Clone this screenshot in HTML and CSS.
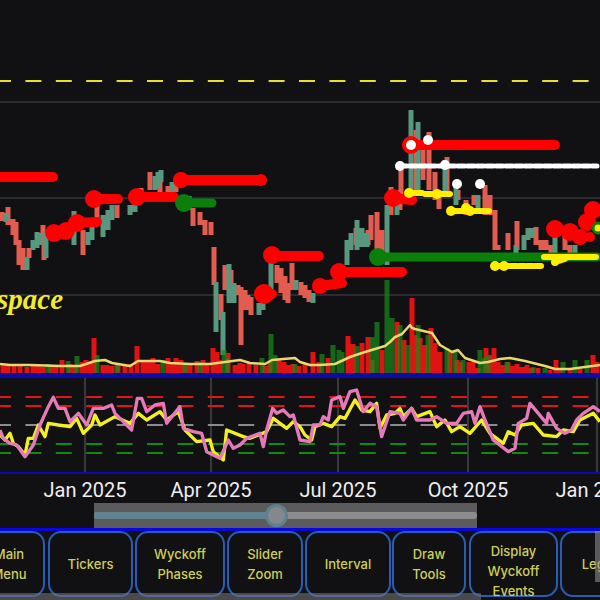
FILE: index.html
```html
<!DOCTYPE html>
<html lang="en">
<head>
  <meta charset="UTF-8" />
  <title>Wyckoff Chart</title>
  <link rel="stylesheet" href="styles.css">
</head>
<body>
  <!-- Chart panels and date axis -->
  <svg class="chart" viewBox="0 0 600 503" width="600" height="503">
    <path class="grid" d="M0 102H600M0 198H600M0 295H600" />
    <path class="level-top" d="M-5 81H600" />

    <!-- Candles -->
    <path class="candle-down" d="M2 212V221M8 207V225M13 219V235M16 222V245M19 240V265M23 248V270M29 248V258M43 225V245M44 232V260M83 230V255M97 205V225M117 205V218M141 188V200M150 172V190M160 180V192M168 186V198M176 178V192M193 208V226M200 212V225M205 220V235M211 222V235M214 247V285M221 294V320M225 265V290M231 270V285M238 285V295M241 287V345M245 290V310M248 295V310M251 297V315M277 265V283M281 268V293M285 276V300M288 283V303M292 263V290M301 282V295M305 285V298M309 290V302M356 228V245M368 230V245M371 215V240M377 212V250M382 230V260M391 187V215M400 190V210M401 170V195M416 130V195M423 150V180M429 132V190M435 172V200M439 190V209M447 157V192M458 190V200M466 200V215M474 195V205M485 185V215M490 195V215M495 210V250M498 245V250M508 233V250M517 221V250M536 227V245M541 240V250M546 240V250M551 245V253M565 235V250M570 245V255" />
    <path class="candle-up" d="M6 213V222M27 257V270M33 240V250M37 232V248M40 233V245M46 232V258M74 211V245M88 232V245M92 220V240M103 215V237M108 210V230M112 205V220M130 205V215M135 200V212M155 176V190M158 172V188M161 170V182M172 182V192M189 196V210M216 282V332M223 312V355M229 264V303M234 283V303M259 303V315M263 295V310M271 262V295M296 280V290M313 293V303M347 240V265M351 233V250M357 220V250M362 228V247M367 233V247M387 205V265M397 200V215M411 110V200M418 122V190M445 160V195M456 185V205M478 195V210M516 245V255M524 235V250M528 228V240M532 228V238M555 237V255M575 245V255" />

    <!-- Wyckoff event markers -->
    <g class="mark-red">
      <path d="M-5 177H53M181 180H258M94 199H118M137 197H174M54 233L66 231L77 223L97 222M272 256H319M264 294H272M320 286L342 283M339 272H402M393 198L412 200M411 145H555" />
      <circle cx="181" cy="180" r="8" />
      <circle cx="261" cy="180" r="6" />
      <circle cx="94" cy="199" r="9" />
      <circle cx="137" cy="197" r="9" />
      <circle cx="54" cy="233" r="9" />
      <circle cx="66" cy="231" r="9" />
      <circle cx="77" cy="223" r="9" />
      <circle cx="272" cy="255" r="9" />
      <circle cx="264" cy="294" r="10" />
      <circle cx="320" cy="286" r="8" />
      <circle cx="339" cy="272" r="9" />
      <circle cx="393" cy="198" r="9" />
      <circle cx="411" cy="145" r="9" />
      <circle cx="555" cy="229" r="9" />
      <circle cx="570" cy="232" r="9" />
      <circle cx="580" cy="237" r="8" />
      <circle cx="590" cy="237" r="5" />
      <circle cx="587" cy="222" r="9" />
      <circle cx="593" cy="210" r="9" />
    </g>
    <g class="mark-green">
      <path d="M184 203H212M378 257H597" />
      <circle cx="184" cy="203" r="9" />
      <circle cx="378" cy="257" r="9" />
    </g>
    <g class="mark-white">
      <path class="mark-dots" d="M400 166H597" />
      <circle cx="411" cy="145" r="5" />
      <circle cx="428" cy="140" r="5" />
      <circle cx="400" cy="166" r="5" />
      <circle cx="445" cy="165" r="5" />
      <circle cx="457" cy="184" r="5" />
      <circle cx="480" cy="184" r="5" />
    </g>
    <g class="mark-yellow">
      <path d="M409 193H422M425 194H450M451 211H490M495 266H543M544 257H596M555 262L565 259" />
      <circle cx="409" cy="193" r="5" />
      <circle cx="437" cy="194" r="5" />
      <circle cx="451" cy="211" r="5" />
      <circle cx="466" cy="208" r="5" />
      <circle cx="470" cy="211" r="5" />
      <circle cx="495" cy="266" r="5" />
      <circle cx="504" cy="266" r="5" />
      <circle cx="555" cy="262" r="4" />
    </g>
    <circle class="mark-ring" cx="598" cy="228" r="5" />
    <text class="watermark" x="-3" y="309">space</text>

    <!-- Volume -->
    <path class="vol-red" d="M3 373V364M8 373V365M14 373V365M20 373V364M27 373V367M33 373V366M38 373V366M43 373V367M51 373V367M56 373V366M62 373V360M70 373V364M75 373V366M82 373V362M86 373V360M90 373V363M94 373V338M103 373V365M107 373V365M112 373V366M118 373V364M125 373V366M131 373V364M137 373V346M143 373V361M148 373V362M153 373V358M158 373V364M168 373V358M172 373V362M176 373V358M181 373V360M186 373V365M190 373V363M197 373V361M203 373V360M207 373V364M213 373V348M217 373V352M220 373V360M228 373V353M235 373V365M240 373V363M243 373V364M249 373V362M256 373V365M265 373V366M270 373V362M279 373V360M284 373V362M288 373V365M293 373V364M299 373V366M305 373V364M313 373V352M319 373V362M328 373V358M348 373V336M353 373V344M362 373V343M368 373V337M372 373V360M382 373V350M397 373V322M404 373V340M412 373V298M415 373V335M420 373V338M425 373V345M431 373V328M435 373V343M440 373V352M450 373V352M457 373V360M460 373V362M469 373V362M473 373V362M478 373V368M486 373V348M490 373V355M494 373V348M498 373V362M503 373V365M508 373V362M512 373V366M517 373V364M522 373V367M527 373V365M532 373V368M538 373V368M550 373V370M556 373V360M560 373V370M570 373V368M580 373V369M593 373V355M597 373V362" />
    <path class="vol-green" d="M48 373V364M68 373V361M77 373V356M97 373V355M117 373V365M163 373V360M185 373V364M200 373V362M224 373V350M227 373V358M262 373V358M271 373V334M275 373V355M295 373V364M322 373V354M333 373V345M339 373V350M342 373V352M357 373V346M372 373V337M377 373V322M387 373V280M392 373V318M400 373V325M408 373V345M418 373V325M428 373V335M447 373V348M455 373V350M463 373V360M480 373V350M484 373V358M488 373V356M507 373V362M533 373V367M545 373V368M563 373V362M575 373V360M587 373V360" />
    <path class="vol-line" d="M0 364L10 365H30L60 366H80L95 361L105 360L112 363L130 366L138 361H160L170 363L190 364H210L240 360L250 363L265 364L272 360L295 358L300 362L310 365H320L335 364L350 357L365 352L385 346L390 342L395 337L402 334L410 325L412 328L415 329L432 333L440 345L452 352L458 350L465 358L480 363L488 362L500 359L510 358L525 361L545 366L555 369H570L585 367L600 365" />

    <!-- Oscillator panel -->
    <rect class="band" x="0" y="373" width="600" height="5" />
    <path class="vgrid" d="M85 378V472M211 378V472M338 378V472M468 378V472M597 378V472" />
    <path class="dash-red" d="M-5 397H600M-5 406H600" />
    <path class="dash-gray" d="M-5 425H600" />
    <path class="dash-green" d="M-5 444H600M-5 453H600" />
    <g transform="translate(0 370) scale(.3333)">
      <polyline class="osc-yellow" points="0,195 15,210 30,190 40,220 55,230 75,255 85,205 100,205 115,165 135,200 145,160 175,165 210,170 230,145 250,190 275,165 285,135 300,165 345,140 390,160 415,130 440,150 480,125 500,150 535,125 555,180 590,215 630,210 640,245 670,270 680,180 730,200 750,205 800,185 820,145 860,175 880,155 900,170 915,195 935,210 945,170 970,160 995,170 1020,140 1035,145 1065,90 1085,120 1110,125 1130,100 1140,175 1160,135 1185,130 1200,115 1210,140 1235,115 1250,140 1290,125 1310,170 1335,150 1355,185 1380,170 1410,190 1445,150 1470,190 1510,220 1525,185 1545,195 1565,165 1600,160 1630,195 1670,200 1690,180 1720,185 1740,150 1780,130 1800,155" />
      <polyline class="osc-pink" points="0,180 10,205 30,220 50,225 75,260 100,225 120,165 145,110 160,82 175,115 195,115 210,155 235,130 260,165 280,115 310,115 335,105 345,130 395,180 412,85 425,85 440,125 465,105 490,100 500,160 540,110 550,175 580,185 605,190 620,245 660,265 685,210 700,235 720,225 740,205 780,190 790,230 800,180 818,115 830,130 850,120 870,140 880,135 900,210 930,215 940,165 960,165 970,140 985,150 995,90 1020,80 1030,115 1050,65 1070,60 1090,125 1110,100 1130,110 1145,200 1170,125 1200,130 1210,150 1235,115 1250,150 1290,150 1310,140 1340,160 1370,160 1390,130 1415,125 1425,160 1440,110 1455,150 1480,210 1525,245 1545,235 1555,160 1580,145 1590,100 1615,130 1640,160 1645,130 1670,175 1695,190 1715,180 1730,150 1750,130 1780,110 1800,125" />
    </g>
    <rect class="band" x="0" y="472" width="600" height="2" />

    <!-- Date axis -->
    <text class="axis-label" x="85" y="497">Jan 2025</text>
    <text class="axis-label" x="211" y="497">Apr 2025</text>
    <text class="axis-label" x="338" y="497">Jul 2025</text>
    <text class="axis-label" x="468" y="497">Oct 2025</text>
    <text class="axis-label" x="597" y="497">Jan 2026</text>
  </svg>

  <!-- Date range slider -->
  <div class="slider">
    <div class="slider-track">
      <div class="slider-fill"></div>
      <div class="slider-thumb"></div>
    </div>
  </div>

  <!-- Bottom menu -->
  <nav class="menu">
    <button class="menu-btn btn-main">Main<br>Menu</button>
    <button class="menu-btn btn-tickers">Tickers</button>
    <button class="menu-btn btn-phases">Wyckoff<br>Phases</button>
    <button class="menu-btn btn-zoom">Slider<br>Zoom</button>
    <button class="menu-btn btn-interval">Interval</button>
    <button class="menu-btn btn-draw">Draw<br>Tools</button>
    <button class="menu-btn btn-events">Display<br>Wyckoff<br>Events</button>
    <button class="menu-btn btn-legend">Legend</button>
    <div class="scroll-x"></div>
    <div class="scroll-y"></div>
  </nav>
</body>
</html>
```

FILE: styles.css
```css
html, body {
  margin: 0;
  padding: 0;
  height: 600px;
  overflow: hidden;
  background: #111114;
}

body {
  display: flex;
  flex-direction: column;
  font-family: Inter, sans-serif;
}

.chart {
  display: block;
  flex: none;
}

.chart path,
.chart polyline {
  fill: none;
}

.grid {
  stroke: #33333b;
  stroke-width: 1.5;
}

.level-top {
  stroke: #e6e22c;
  stroke-width: 2;
  stroke-dasharray: 16 14.4;
}

.candle-down {
  stroke: #e25c50;
  stroke-width: 5;
}

.candle-up {
  stroke: #58987f;
  stroke-width: 5;
}

.mark-red path,
.mark-green path,
.mark-white path,
.mark-yellow path {
  stroke-linecap: round;
  stroke-linejoin: round;
}

.mark-red circle {
  fill: #ff0000;
}

.mark-red path {
  stroke: #ff0000;
  stroke-width: 10;
}

.mark-green circle {
  fill: #0a800a;
}

.mark-green path {
  stroke: #0a800a;
  stroke-width: 9;
}

.mark-white circle {
  fill: #ffffff;
}

.mark-dots {
  stroke: #ffffff;
  stroke-width: 5;
  stroke-dasharray: 7 2.6;
}

.mark-yellow circle {
  fill: #ffee00;
}

.mark-yellow path {
  stroke: #ffee00;
  stroke-width: 6;
  stroke-dasharray: 6 2;
}

.mark-ring {
  fill: #ffee00;
  stroke: #0a800a;
  stroke-width: 3;
}

.watermark {
  fill: #f2ea2e;
  font-family: "Liberation Serif", serif;
  font-size: 29px;
  font-style: italic;
  font-weight: bold;
}

.vol-red {
  stroke: #e01212;
  stroke-width: 5;
}

.vol-green {
  stroke: #178a17;
  stroke-width: 5;
  opacity: 0.7;
}

.vol-line {
  stroke: #e9d872;
  stroke-width: 2.5;
  stroke-linejoin: round;
}

.band {
  fill: #0a0ab0;
}

.vgrid {
  stroke: #46464c;
  stroke-width: 1.5;
}

.dash-red,
.dash-gray,
.dash-green {
  stroke-width: 2;
  stroke-dasharray: 16 14.4;
}

.dash-red {
  stroke: #e01515;
}

.dash-gray {
  stroke: #8c8c8c;
}

.dash-green {
  stroke: #128a12;
}

.osc-yellow {
  stroke: #f4f020;
  stroke-width: 10;
  stroke-linejoin: round;
}

.osc-pink {
  stroke: #e67ab8;
  stroke-width: 10;
  stroke-linejoin: round;
}

.axis-label {
  fill: #eeeeee;
  font-family: Roboto, sans-serif;
  font-size: 20px;
  text-anchor: middle;
}

.slider {
  flex: none;
  display: flex;
  align-items: center;
  width: 383px;
  height: 25px;
  margin-left: 94px;
  background: #5b5b5d;
}

.slider-track {
  position: relative;
  flex: 1;
  height: 7px;
  border-radius: 3px;
  background: #8c8c8e;
}

.slider-fill {
  width: 182px;
  height: 100%;
  border-radius: 3px 0 0 3px;
  background: #62828f;
}

.slider-thumb {
  position: absolute;
  left: 171px;
  top: -8px;
  box-sizing: border-box;
  width: 23px;
  height: 23px;
  border: 3px solid #5f818f;
  border-radius: 50%;
  background: #84888c;
}

.menu {
  position: relative;
  flex: 1;
  display: flex;
  gap: 2px;
  min-height: 0;
  padding-bottom: 3px;
  border-top: 3px solid #0808dc;
  overflow: hidden;
  box-sizing: border-box;
}

.menu-btn {
  flex: none;
  box-sizing: border-box;
  height: 66px;
  padding: 0;
  border: 2px solid #2a5cb4;
  border-radius: 13px;
  background: #111114;
  color: #cfcf55;
  font-family: Inter, sans-serif;
  font-size: 13px;
  font-weight: 500;
  line-height: 20px;
}

.btn-main {
  width: 72px;
  margin-left: -27px;
}

.btn-tickers {
  width: 85px;
  margin-left: 1px;
}

.btn-phases {
  width: 90px;
}

.btn-zoom {
  width: 76px;
}

.btn-interval {
  width: 86px;
}

.btn-draw {
  width: 74px;
  margin-left: -1px;
}

.btn-events {
  width: 89px;
  margin-left: 1px;
  padding-top: 8px;
}

.btn-legend {
  width: 90px;
}

.scroll-x {
  position: absolute;
  left: 0;
  bottom: 0;
  width: 481px;
  height: 7px;
  background: rgba(120, 120, 125, 0.55);
}

.scroll-y {
  position: absolute;
  right: 0;
  top: 0;
  width: 5px;
  height: 51px;
  background: rgba(140, 140, 140, 0.6);
}
```
